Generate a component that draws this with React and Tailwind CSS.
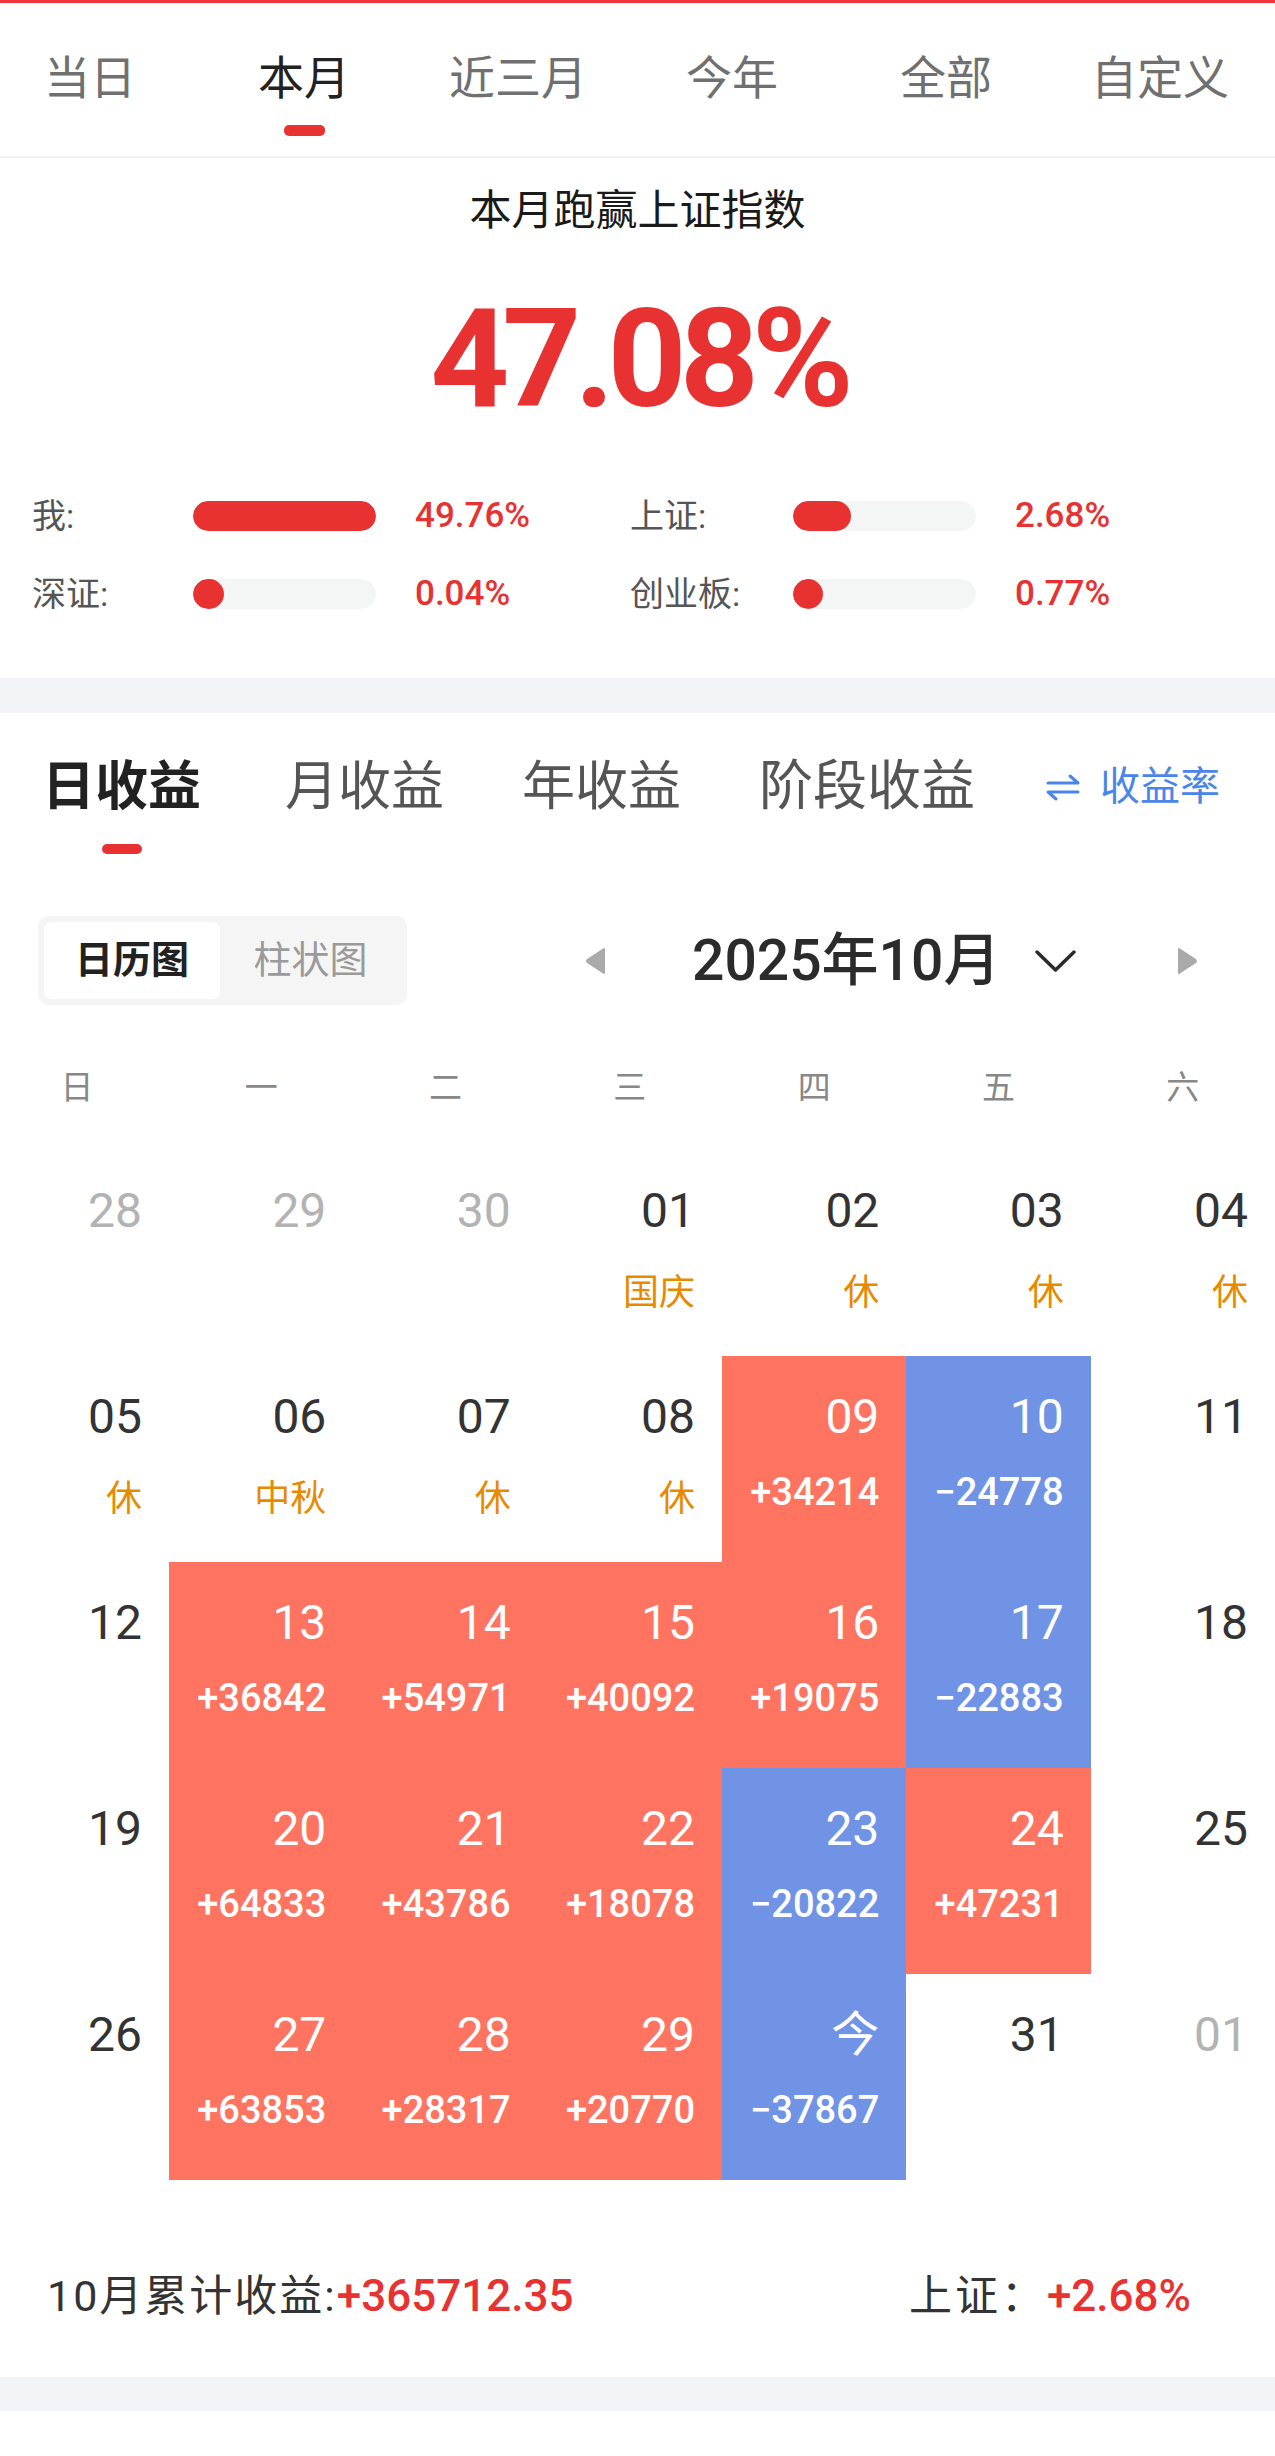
import React from "react";

const rows = [
  [
    { d: "28", g: 1 },
    { d: "29", g: 1 },
    { d: "30", g: 1 },
    { d: "01", h: "国庆" },
    { d: "02", h: "休" },
    { d: "03", h: "休" },
    { d: "04", h: "休" },
  ],
  [
    { d: "05", h: "休" },
    { d: "06", h: "中秋" },
    { d: "07", h: "休" },
    { d: "08", h: "休" },
    { d: "09", a: "+34214", r: 1 },
    { d: "10", a: "−24778", b: 1 },
    { d: "11" },
  ],
  [
    { d: "12" },
    { d: "13", a: "+36842", r: 1 },
    { d: "14", a: "+54971", r: 1 },
    { d: "15", a: "+40092", r: 1 },
    { d: "16", a: "+19075", r: 1 },
    { d: "17", a: "−22883", b: 1 },
    { d: "18" },
  ],
  [
    { d: "19" },
    { d: "20", a: "+64833", r: 1 },
    { d: "21", a: "+43786", r: 1 },
    { d: "22", a: "+18078", r: 1 },
    { d: "23", a: "−20822", b: 1 },
    { d: "24", a: "+47231", r: 1 },
    { d: "25" },
  ],
  [
    { d: "26" },
    { d: "27", a: "+63853", r: 1 },
    { d: "28", a: "+28317", r: 1 },
    { d: "29", a: "+20770", r: 1 },
    { d: "今", a: "−37867", b: 1 },
    { d: "31" },
    { d: "01", g: 1 },
  ],
];

function Cell({ c }) {
  const bg = c.r ? "bg-[#ff7461]" : c.b ? "bg-[#7093e5]" : "bg-white";
  const numColor = c.r || c.b ? "text-white" : c.g ? "text-[#b3b3b3]" : "text-[#333333]";
  return (
    <div className={`${bg} h-[206px] flex flex-col items-end pr-[27px]`}>
      <div className={`pt-[33px] text-[48px] leading-[56px] ${numColor}`}>{c.d}</div>
      {c.a && (
        <div className="mt-[23px] text-[38px] leading-[48px] font-medium text-white">{c.a}</div>
      )}
      {c.h && <div className="mt-[30px] text-[36px] leading-[48px] text-[#e88a00]">{c.h}</div>}
    </div>
  );
}

function Bar({ label, fill, value }) {
  return (
    <>
      <div className="text-[34px] leading-[40px] text-[#555555]">{label}</div>
      <div className="flex items-center">
        <div className="w-[183px] h-[30px] rounded-full bg-[#f4f5f5] overflow-hidden">
          <div className="h-[30px] rounded-full bg-[#e83232]" style={{ width: fill }} />
        </div>
      </div>
      <div className="text-[35px] leading-[40px] font-medium text-[#e83232]">{value}</div>
    </>
  );
}

export default function App() {
  const topTabs = ["当日", "本月", "近三月", "今年", "全部", "自定义"];
  const weekdays = ["日", "一", "二", "三", "四", "五", "六"];
  return (
    <div className="w-[1275px] h-[2456px] bg-white overflow-hidden font-[Roboto,'Noto_Sans_CJK_SC',sans-serif]">
      <div className="h-[3px] bg-[#f5323f]" />
      {/* top tabs */}
      <div className="h-[153px] flex items-start">
        {topTabs.map((t, i) => (
          <div
            key={t}
            className={`${i === 0 ? "w-[197px] pr-[17px]" : "w-[214px]"} flex flex-col items-center pt-[45px]`}
          >
            <div
              className={`text-[46px] leading-[60px] ${i === 1 ? "text-[#222222]" : "text-[#707070]"}`}
            >
              {t}
            </div>
            {i === 1 && <div className="mt-[17px] w-[41px] h-[11px] rounded-[5px] bg-[#e83232]" />}
          </div>
        ))}
      </div>
      <div className="h-[2px] bg-[#f2f2f2]" />

      {/* summary */}
      <div className="pt-[25px] pb-[64px]">
        <div className="text-center text-[42px] leading-[56px] text-[#1a1a1a]">本月跑赢上证指数</div>
        <div className="mt-[51px] pl-[2px] text-center text-[138px] leading-[138px] font-bold tracking-[-7px] text-[#e83232]">
          47.08%
        </div>
        <div className="mt-[68px] pl-[32px] grid grid-cols-[161px_222px_215px_163px_222px_auto] gap-y-[38px] items-center">
          <Bar label="我:" fill="183px" value="49.76%" />
          <Bar label="上证:" fill="58px" value="2.68%" />
          <Bar label="深证:" fill="31px" value="0.04%" />
          <Bar label="创业板:" fill="30px" value="0.77%" />
        </div>
      </div>
      <div className="h-[35px] bg-[#f3f4f8]" />

      {/* income tabs */}
      <div className="pt-[44px] pl-[42px] pr-[55px] flex items-start">
        <div className="flex flex-col items-center">
          <div className="text-[53px] leading-[60px] font-bold text-[#222222]">日收益</div>
          <div className="mt-[27px] w-[40px] h-[10px] rounded-[5px] bg-[#e83232]" />
        </div>
        <div className="ml-[84px] text-[53px] leading-[60px] text-[#555555]">月收益</div>
        <div className="ml-[78px] text-[53px] leading-[60px] text-[#555555]">年收益</div>
        <div className="ml-[78px] text-[54px] leading-[60px] text-[#555555]">阶段收益</div>
        <div className="ml-auto flex items-center h-[60px] text-[40px] text-[#4a86e8]">
          <svg width="34" height="28" viewBox="0 0 34 28" fill="none" stroke="#4a86e8" strokeWidth="3" strokeLinecap="round" strokeLinejoin="round">
            <path d="M2 10 H32 L24 3" />
            <path d="M32 19 H2 L10 26" />
          </svg>
          <span className="ml-[20px] leading-[60px]">收益率</span>
        </div>
      </div>

      {/* toggle + month nav */}
      <div className="mt-[62px] flex items-center h-[89px]">
        <div className="ml-[38px] w-[369px] h-[89px] rounded-[10px] bg-[#f5f5f5] p-[6px] flex items-center">
          <div className="w-[176px] h-[77px] rounded-[8px] bg-white flex items-center justify-center text-[38px] font-bold text-[#222222]">
            日历图
          </div>
          <div className="flex-1 flex items-center justify-center text-[38px] text-[#9a9a9a]">柱状图</div>
        </div>
        <svg className="ml-[178px]" width="21" height="28" viewBox="0 0 21 28">
          <path d="M19 2 L3 12.5 Q1 14 3 15.5 L19 26 Z" fill="#aaaaaa" stroke="#aaaaaa" strokeWidth="2" strokeLinejoin="round" />
        </svg>
        <div className="ml-[86px] text-[57px] leading-[64px] font-medium text-[#2b2b2b]">2025年10月</div>
        <svg className="ml-[34px]" width="43" height="24" viewBox="0 0 43 24" fill="none" stroke="#2b2b2b" strokeWidth="3.5" strokeLinecap="round" strokeLinejoin="round">
          <path d="M3 3 L21.5 21 L40 3" />
        </svg>
        <svg className="ml-[100px]" width="21" height="28" viewBox="0 0 21 28">
          <path d="M2 2 L18 12.5 Q20 14 18 15.5 L2 26 Z" fill="#aaaaaa" stroke="#aaaaaa" strokeWidth="2" strokeLinejoin="round" />
        </svg>
      </div>

      {/* weekdays */}
      <div className="mt-[61px] grid grid-cols-[169px_repeat(6,minmax(0,1fr))] h-[44px]">
        {weekdays.map((w, i) => (
          <div
            key={w}
            className={`${i === 0 ? "pr-[15px]" : ""} text-center text-[33px] leading-[44px] text-[#888888]`}
          >
            {w}
          </div>
        ))}
      </div>

      {/* calendar grid */}
      <div className="mt-[40px] grid grid-cols-[169px_repeat(6,minmax(0,1fr))]">
        {rows.flat().map((c, i) => (
          <Cell key={i} c={c} />
        ))}
      </div>

      {/* footer */}
      <div className="mt-[88px] h-[56px] pl-[47px] pr-[84px] flex items-center justify-between">
        <div className="flex items-center">
          <span className="text-[43px] leading-[56px] tracking-[2px] text-[#333333]">10月累计收益:</span>
          <span className="text-[44px] leading-[56px] font-medium text-[#e83232]">+365712.35</span>
        </div>
        <div className="flex items-center">
          <span className="text-[43px] leading-[56px] tracking-[3px] text-[#333333]">上证：</span>
          <span className="text-[44px] leading-[56px] font-medium text-[#e83232]">+2.68%</span>
        </div>
      </div>
      <div className="mt-[53px] h-[34px] bg-[#f3f4f8]" />
    </div>
  );
}
